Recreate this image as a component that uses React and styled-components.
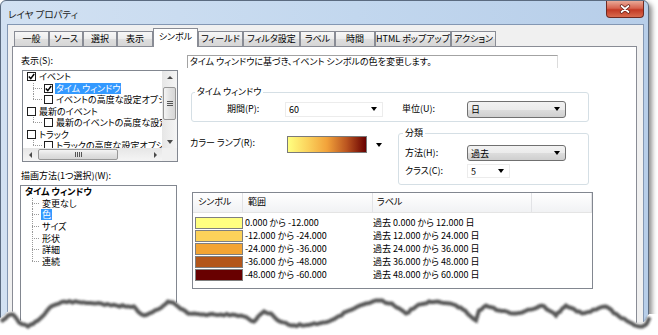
import { createGlobalStyle, styled } from "styled-components";

const GlobalStyle = createGlobalStyle`
  html, body {
    margin: 0;
    padding: 0;
    background: #fff;
  }
  body {
    font-family: "Noto Sans CJK JP", "Noto Sans", sans-serif;
    font-size: 9px;
    color: #000;
    font-feature-settings: "palt";
  }
`;

const Page = styled.div`
  position: relative;
  width: 658px;
  height: 335px;
  overflow: hidden;
`;

const Window = styled.div`
  width: 649px;
  height: 400px;
  box-sizing: border-box;
  border: 1px solid #5b6b80;
  border-radius: 6px 6px 0 0;
  background: linear-gradient(90deg, #d2e1f2 0%, #c2d7ee 55%, #b7cee9 100%);
  box-shadow: 3px 3px 5px rgba(0, 0, 0, 0.45);
  padding: 0 4px 0 6px;
  display: flex;
  flex-direction: column;
`;

const TitleBar = styled.div`
  flex: none;
  height: 23px;
  display: flex;
  align-items: flex-start;
  justify-content: space-between;
`;

const Title = styled.div`
  margin: 7px 0 0 1px;
  font-size: 9.5px;
  line-height: 12px;
  color: #1b1b1b;
`;

const CloseButton = styled.div`
  width: 38px;
  height: 17px;
  box-sizing: border-box;
  border: 1px solid #6e2a22;
  border-top: none;
  border-radius: 0 0 4px 4px;
  background: linear-gradient(#e9a997 0%, #d6634f 45%, #c23a25 55%, #d86a4e 100%);
  display: grid;
  place-items: center;
`;

const Client = styled.div`
  flex: 1;
  min-height: 0;
  border: 1px solid #8397b3;
  border-bottom: none;
  background: #f0f0f0;
  display: flex;
  flex-direction: column;
`;

const TabStrip = styled.div`
  flex: none;
  height: 21px;
  display: flex;
  align-items: flex-end;
  padding-left: 6px;
`;

const Tab = styled.div`
  position: relative;
  width: ${(p) => p.$w}px;
  height: ${(p) => (p.$active ? 19 : 15)}px;
  margin-bottom: ${(p) => (p.$active ? -1 : 0)}px;
  z-index: ${(p) => (p.$active ? 1 : 0)};
  box-sizing: border-box;
  border: 1px solid #898c95;
  border-bottom: none;
  background: ${(p) =>
    p.$active ? "#fff" : "linear-gradient(#f7f7f7 0%, #ececec 50%, #dedede 51%, #d6d6d6 100%)"};
  text-align: center;
  line-height: ${(p) => (p.$active ? 16 : 13)}px;
  white-space: nowrap;
`;

const TabPanel = styled.div`
  flex: 1;
  margin-left: 4px;
  width: 625px;
  box-sizing: border-box;
  border: 1px solid #898c95;
  background: #fff;
  display: flex;
  align-items: flex-start;
`;

const LeftCol = styled.div`
  margin-left: 8px;
  width: 157px;
  display: flex;
  flex-direction: column;
`;

const FieldLabel = styled.div`
  margin-top: ${(p) => p.$mt}px;
  height: 12px;
  line-height: 12px;
  white-space: nowrap;
`;

const TreeBox = styled.div`
  margin: 3px 0 0 1px;
  width: 156px;
  height: 92px;
  box-sizing: border-box;
  border: 1px solid #828790;
  display: grid;
  grid-template-columns: 1fr 15px;
  grid-template-rows: 1fr 13px;
  overflow: hidden;
`;

const TreeList = styled.div`
  overflow: hidden;
  white-space: nowrap;
`;

const TreeRow = styled.div`
  display: flex;
  align-items: center;
  height: ${(p) => p.$h}px;
  padding-left: ${(p) => p.$pl}px;
  font-weight: ${(p) => (p.$bold ? "bold" : "normal")};
`;

const Connector = styled.span`
  align-self: stretch;
  flex: none;
  width: ${(p) => p.$w}px;
  background:
    repeating-linear-gradient(to bottom, #9a9a9a 0 1px, transparent 1px 2px) left top /
      1px ${(p) => (p.$last ? "50%" : "100%")} no-repeat,
    repeating-linear-gradient(to right, #9a9a9a 0 1px, transparent 1px 2px) left 50% / 100% 1px
      no-repeat;
`;

const Check = styled.span`
  flex: none;
  width: 9px;
  height: 9px;
  box-sizing: border-box;
  border: 1px solid #1e1e1e;
  background: #fff;
  margin: 0 2px 0 ${(p) => p.$ml || 0}px;
  display: grid;
  place-items: center;
`;

const ItemText = styled.span`
  padding: 0 1px;
  margin-left: ${(p) => p.$ml || 0}px;
  line-height: 11px;
  background: ${(p) => (p.$selected ? "#3399ff" : "transparent")};
  color: ${(p) => (p.$selected ? "#fff" : "#000")};
`;

const VScroll = styled.div`
  grid-column: 2;
  grid-row: 1;
  display: flex;
  flex-direction: column;
  background: linear-gradient(90deg, #e6e6e6, #f5f5f5);
`;

const HScroll = styled.div`
  grid-column: 1;
  grid-row: 2;
  display: flex;
  align-items: stretch;
  background: linear-gradient(#e6e6e6, #f5f5f5);
`;

const Corner = styled.div`
  grid-column: 2;
  grid-row: 2;
  background: #f0f0f0;
`;

const ScrollBtn = styled.div`
  flex: none;
  width: ${(p) => (p.$horizontal ? 14 : 15)}px;
  height: 13px;
  display: grid;
  place-items: center;
`;

const Spacer = styled.div`
  flex: 1;
`;

const Thumb = styled.div`
  flex: none;
  box-sizing: border-box;
  border: 1px solid #979797;
  border-radius: 2px;
  background: ${(p) =>
    p.$horizontal
      ? "linear-gradient(#f4f4f4, #e2e2e2 50%, #d6d6d6)"
      : "linear-gradient(90deg, #f4f4f4, #e2e2e2 50%, #d6d6d6)"};
  ${(p) =>
    p.$horizontal
      ? "width: 80px; margin: 1px 0 1px 1px;"
      : "height: 33px; margin: 3px 1px 0 1px;"}
  display: grid;
  place-items: center;
`;

const Grip = styled.div`
  ${(p) =>
    p.$horizontal
      ? "width: 7px; height: 5px; background: repeating-linear-gradient(90deg, #555 0 1px, transparent 1px 2px);"
      : "width: 6px; height: 5px; background: repeating-linear-gradient(#555 0 1px, transparent 1px 2px);"}
`;

const Arrow = styled.span`
  width: 0;
  height: 0;
  ${({ $dir, $size = 3 }) => {
    const s = $size;
    if ($dir === "up")
      return `border-left: ${s}px solid transparent; border-right: ${s}px solid transparent; border-bottom: ${s}px solid #4a4a4a;`;
    if ($dir === "left")
      return `border-top: ${s}px solid transparent; border-bottom: ${s}px solid transparent; border-right: ${s}px solid #4a4a4a;`;
    if ($dir === "right")
      return `border-top: ${s}px solid transparent; border-bottom: ${s}px solid transparent; border-left: ${s}px solid #4a4a4a;`;
    return `border-left: ${s}px solid transparent; border-right: ${s}px solid transparent; border-top: ${s + 1}px solid ${$dir === "drop" ? "#000" : "#4a4a4a"};`;
  }}
`;

const MethodBox = styled.div`
  margin: 3px 0 0 -1px;
  width: 157px;
  height: 180px;
  box-sizing: border-box;
  border: 1px solid #828790;
  white-space: nowrap;
`;

const RightCol = styled.div`
  margin-left: 9px;
  width: 406px;
  padding-top: 8px;
  display: flex;
  flex-direction: column;
`;

const Description = styled.div`
  width: 371px;
  height: 13px;
  box-sizing: border-box;
  border-top: 1px solid #a3a3a3;
  border-left: 1px solid #a3a3a3;
  border-right: 1px solid #dcdcdc;
  padding-left: 2px;
  line-height: 12px;
  white-space: nowrap;
`;

const GroupBox = styled.fieldset`
  margin: ${(p) => p.$mt || 0}px 0 0 ${(p) => p.$ml || 0}px;
  width: ${(p) => p.$w}px;
  box-sizing: border-box;
  min-width: 0;
  border: 1px solid #d5dfe5;
  border-radius: 3px;
  padding: 0 0 ${(p) => p.$pb}px 0;
`;

const Legend = styled.legend`
  margin-left: ${(p) => p.$ml}px;
  padding: 0 2px;
  line-height: 12px;
  font-size: 9px;
`;

const FormRow = styled.div`
  display: flex;
  align-items: center;
  margin-top: ${(p) => p.$mt}px;
  height: ${(p) => p.$h}px;
`;

const FormLabel = styled.div`
  flex: none;
  width: ${(p) => p.$w}px;
  padding-left: ${(p) => p.$pl || 0}px;
  margin-left: ${(p) => p.$ml || 0}px;
  box-sizing: border-box;
  line-height: 12px;
  white-space: nowrap;
`;

const Combo = styled.div`
  flex: none;
  width: ${(p) => p.$w}px;
  height: ${(p) => p.$h}px;
  box-sizing: border-box;
  display: flex;
  align-items: center;
  justify-content: space-between;
  padding: 0 5px 0 3px;
  ${(p) =>
    p.$button
      ? `border: 1px solid #707070; border-radius: 3px;
         background: linear-gradient(#f2f2f2 0%, #ebebeb 50%, #dddddd 51%, #cfcfcf 100%);`
      : `border: 1px solid #ececec; background: #fff;`}
`;

const RampRow = styled.div`
  display: flex;
  align-items: flex-start;
  margin-top: 5px;
`;

const RampLeft = styled.div`
  width: 211px;
  flex: none;
  display: flex;
  align-items: flex-start;
  padding: 8px 0 0 3px;
  box-sizing: border-box;
`;

const RampLabel = styled.div`
  width: 95px;
  flex: none;
  line-height: 15px;
  white-space: nowrap;
`;

const RampCombo = styled.div`
  width: 100px;
  height: 19px;
  box-sizing: border-box;
  display: flex;
  align-items: center;
  justify-content: space-between;
  padding: 0 3px 0 2px;
`;

const Ramp = styled.div`
  width: 80px;
  height: 17px;
  box-sizing: border-box;
  border: 1px solid #7a7a7a;
  background: linear-gradient(90deg, #ffff80 0%, #fbd35d 25%, #f2a23a 50%, #bb5520 75%, #680000 100%);
`;

const Table = styled.div`
  margin: 7px 0 0 5px;
  width: 401px;
  height: 97px;
  box-sizing: border-box;
  border: 1px solid #828790;
`;

const TableGrid = styled.div`
  display: grid;
  grid-template-columns: 50px 130px 159px 1fr;
  height: ${(p) => p.$h}px;
  ${(p) =>
    p.$header
      ? "background: linear-gradient(#ffffff, #f1f2f4); border-bottom: 1px solid #e4e4e4; box-sizing: border-box;"
      : ""}
`;

const HeaderCell = styled.div`
  border-right: 1px solid #e2e3e6;
  padding-left: ${(p) => p.$pl}px;
  line-height: 18px;
  white-space: nowrap;
`;

const TableBody = styled.div`
  padding-top: 3px;
`;

const Cell = styled.div`
  display: flex;
  align-items: center;
  padding-left: ${(p) => p.$pl}px;
  white-space: nowrap;
  line-height: 12px;
`;

const Swatch = styled.div`
  width: 48px;
  height: 12px;
  box-sizing: border-box;
  border: 1px solid #7f7f7f;
  background: ${(p) => p.$color};
`;

const TornEdge = styled.svg`
  position: absolute;
  left: 0;
  top: 0;
  width: 658px;
  height: 335px;
  pointer-events: none;
`;

const TABS = [
  ["一般", 35],
  ["ソース", 34],
  ["選択", 34],
  ["表示", 36],
  ["シンボル", 45, true],
  ["フィールド", 45],
  ["フィルタ設定", 57],
  ["ラベル", 35],
  ["時間", 40],
  ["HTML ポップアップ", 76],
  ["アクション", 45],
];

const TREE = [
  { level: 0, checked: true, text: "イベント" },
  { level: 1, checked: true, text: "タイム ウィンドウ", selected: true },
  { level: 1, checked: false, text: "イベントの高度な設定オプション", last: true },
  { level: 0, checked: false, text: "最新のイベント" },
  { level: 1, checked: false, text: "最新のイベントの高度な設定オプション", last: true },
  { level: 0, checked: false, text: "トラック" },
  { level: 1, checked: false, text: "トラックの高度な設定オプション", last: true },
];

const METHODS = ["変更なし", "色", "サイズ", "形状", "詳細", "連続"];

const CLASSES = [
  ["#ffff80", "0.000 から -12.000", "過去 0.000 から 12.000 日"],
  ["#fcd25a", "-12.000 から -24.000", "過去 12.000 から 24.000 日"],
  ["#f3a433", "-24.000 から -36.000", "過去 24.000 から 36.000 日"],
  ["#b3561a", "-36.000 から -48.000", "過去 36.000 から 48.000 日"],
  ["#680000", "-48.000 から -60.000", "過去 48.000 から 60.000 日"],
];

const TEAR = [
  [0, 318], [7, 312], [12, 311], [18, 319], [27, 323], [37, 317], [50, 303], [63, 298],
  [80, 299], [100, 300], [110, 302], [133, 303], [137, 308], [143, 312], [157, 306],
  [167, 298], [172, 299], [177, 303], [187, 310], [200, 311], [220, 311], [240, 312],
  [253, 318], [263, 308], [270, 310], [277, 317], [290, 322], [310, 321], [328, 318],
  [348, 307], [365, 300], [378, 297], [391, 300], [405, 310], [415, 303], [428, 298],
  [440, 299], [455, 302], [462, 306], [475, 317], [478, 307], [485, 302], [498, 307],
  [515, 310], [530, 306], [541, 302], [555, 312], [565, 302], [581, 310], [595, 306],
  [605, 303], [618, 313], [631, 320], [638, 323], [645, 321], [649, 314],
];

// break the straight segments up a little so the edge looks torn
function roughen(points) {
  let seed = 11;
  const rnd = () => {
    seed = (seed * 9301 + 49297) % 233280;
    return seed / 233280;
  };
  const out = [];
  for (let i = 0; i < points.length - 1; i++) {
    const [x1, y1] = points[i];
    const [x2, y2] = points[i + 1];
    const steps = Math.max(1, Math.round(Math.hypot(x2 - x1, y2 - y1) / 3));
    for (let s = 0; s < steps; s++) {
      const t = s / steps;
      const jitter = s === 0 ? 0 : (rnd() - 0.5) * 1.8;
      out.push(`${(x1 + (x2 - x1) * t).toFixed(1)},${(y1 + (y2 - y1) * t + jitter).toFixed(1)}`);
    }
  }
  const [lx, ly] = points[points.length - 1];
  out.push(`${lx},${ly}`);
  return out.join(" ");
}

const TEAR_LINE = roughen(TEAR);

function CheckMark() {
  return (
    <svg width="7" height="7" viewBox="0 0 7 7">
      <path d="M0.8 3.4 L2.8 5.6 L6.2 1" fill="none" stroke="#000" strokeWidth="1.5" />
    </svg>
  );
}

function CloseGlyph() {
  return (
    <svg width="12" height="10" viewBox="-6 -5 12 10">
      <path d="M-3.5 -3 L3.5 3 M3.5 -3 L-3.5 3" stroke="#5a1a12" strokeWidth="3.2" strokeLinecap="round" />
      <path d="M-3.5 -3 L3.5 3 M3.5 -3 L-3.5 3" stroke="#fff" strokeWidth="1.8" strokeLinecap="round" />
    </svg>
  );
}

export default function App() {
  return (
    <Page>
      <GlobalStyle />
      <Window>
        <TitleBar>
          <Title>レイヤ プロパティ</Title>
          <CloseButton>
            <CloseGlyph />
          </CloseButton>
        </TitleBar>
        <Client>
          <TabStrip>
            {TABS.map(([label, w, active]) => (
              <Tab key={label} $w={w} $active={active}>
                {label}
              </Tab>
            ))}
          </TabStrip>
          <TabPanel>
            <LeftCol>
              <FieldLabel $mt={8}>表示(S):</FieldLabel>
              <TreeBox>
                <TreeList>
                  {TREE.map((item) => (
                    <TreeRow key={item.text} $h={11.5} $pl={item.level ? 10 : 4}>
                      {item.level > 0 && <Connector $w={10} $last={item.last} />}
                      <Check $ml={item.level ? 1 : 0}>{item.checked && <CheckMark />}</Check>
                      <ItemText $selected={item.selected}>{item.text}</ItemText>
                    </TreeRow>
                  ))}
                </TreeList>
                <VScroll>
                  <ScrollBtn>
                    <Arrow $dir="up" />
                  </ScrollBtn>
                  <Thumb>
                    <Grip />
                  </Thumb>
                  <Spacer />
                  <ScrollBtn>
                    <Arrow $dir="down" />
                  </ScrollBtn>
                </VScroll>
                <HScroll>
                  <ScrollBtn $horizontal>
                    <Arrow $dir="left" />
                  </ScrollBtn>
                  <Thumb $horizontal>
                    <Grip $horizontal />
                  </Thumb>
                  <Spacer />
                  <ScrollBtn $horizontal>
                    <Arrow $dir="right" />
                  </ScrollBtn>
                </HScroll>
                <Corner />
              </TreeBox>

              <FieldLabel $mt={8}>描画方法(1つ選択)(W):</FieldLabel>
              <MethodBox>
                <TreeRow $h={11.6} $pl={4} $bold>
                  タイム ウィンドウ
                </TreeRow>
                {METHODS.map((m, i) => (
                  <TreeRow key={m} $h={11.6} $pl={11}>
                    <Connector $w={8} $last={i === METHODS.length - 1} />
                    <ItemText $ml={1} $selected={m === "色"}>
                      {m}
                    </ItemText>
                  </TreeRow>
                ))}
              </MethodBox>
            </LeftCol>

            <RightCol>
              <Description>タイム ウィンドウに基づき、イベント シンボルの色を変更します。</Description>

              <GroupBox $w={398} $mt={18} $ml={4} $pb={3}>
                <Legend $ml={3}>タイム ウィンドウ</Legend>
                <FormRow $mt={2} $h={18}>
                  <FormLabel $w={93} $pl={35}>
                    期間(P):
                  </FormLabel>
                  <Combo $w={98} $h={15}>
                    <span>60</span>
                    <Arrow $dir="drop" />
                  </Combo>
                  <FormLabel $w={65} $ml={19}>
                    単位(U):
                  </FormLabel>
                  <Combo $w={99} $h={17} $button>
                    <span>日</span>
                    <Arrow $dir="drop" />
                  </Combo>
                </FormRow>
              </GroupBox>

              <RampRow>
                <RampLeft>
                  <RampLabel>カラー ランプ(R):</RampLabel>
                  <RampCombo>
                    <Ramp />
                    <Arrow $dir="drop" />
                  </RampCombo>
                </RampLeft>
                <GroupBox $w={191} $pb={6}>
                  <Legend $ml={4}>分類</Legend>
                  <FormRow $mt={6} $h={16}>
                    <FormLabel $w={68} $pl={6}>
                      方法(H):
                    </FormLabel>
                    <Combo $w={99} $h={16} $button>
                      <span>過去</span>
                      <Arrow $dir="drop" />
                    </Combo>
                  </FormRow>
                  <FormRow $mt={3} $h={14}>
                    <FormLabel $w={68} $pl={6}>
                      クラス(C):
                    </FormLabel>
                    <Combo $w={43} $h={14}>
                      <span>5</span>
                      <Arrow $dir="drop" />
                    </Combo>
                  </FormRow>
                </GroupBox>
              </RampRow>

              <Table>
                <TableGrid $header $h={20}>
                  <HeaderCell $pl={5}>シンボル</HeaderCell>
                  <HeaderCell $pl={5}>範囲</HeaderCell>
                  <HeaderCell $pl={4}>ラベル</HeaderCell>
                  <HeaderCell $pl={4} />
                </TableGrid>
                <TableBody>
                  {CLASSES.map(([color, range, label]) => (
                    <TableGrid key={color} $h={13}>
                      <Cell $pl={2}>
                        <Swatch $color={color} />
                      </Cell>
                      <Cell $pl={2}>{range}</Cell>
                      <Cell $pl={0}>{label}</Cell>
                      <Cell $pl={0} />
                    </TableGrid>
                  ))}
                </TableBody>
              </Table>
            </RightCol>
          </TabPanel>
        </Client>
      </Window>

      <TornEdge viewBox="0 0 658 335">
        <defs>
          <filter id="tear-blur" x="-5%" y="-50%" width="110%" height="200%">
            <feGaussianBlur stdDeviation="1.3" />
          </filter>
        </defs>
        <polygon points={`${TEAR_LINE} 658,314 658,335 0,335`} fill="#fff" />
        <polyline
          points={TEAR_LINE}
          transform="translate(1 3.5)"
          fill="none"
          stroke="#2e2e2e"
          strokeWidth="4"
          opacity="0.8"
          filter="url(#tear-blur)"
        />
      </TornEdge>
    </Page>
  );
}
